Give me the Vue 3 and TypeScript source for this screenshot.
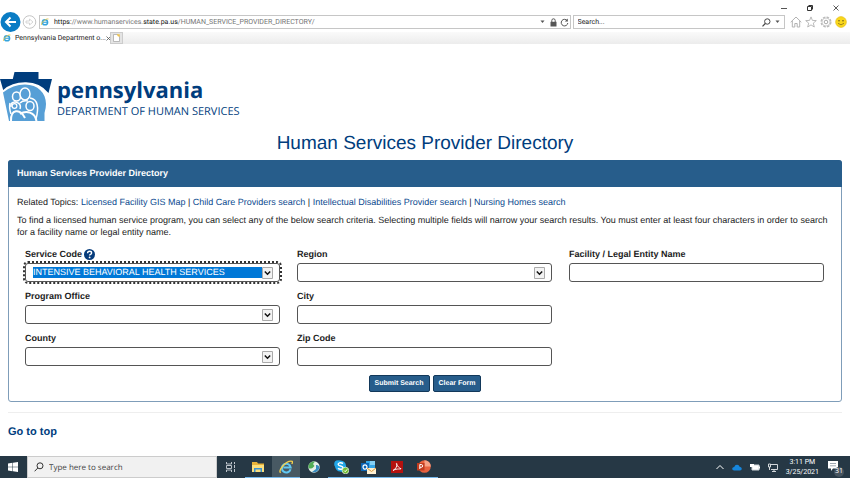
<script setup lang="ts">
import { reactive } from 'vue'

interface Field {
  id: string
  label: string
  kind: 'select' | 'text'
  options?: string[]
  help?: boolean
  active?: boolean
}

const fields: Field[] = [
  { id: 'service', label: 'Service Code', kind: 'select', options: ['INTENSIVE BEHAVIORAL HEALTH SERVICES'], help: true, active: true },
  { id: 'region', label: 'Region', kind: 'select', options: [''] },
  { id: 'facility', label: 'Facility / Legal Entity Name', kind: 'text' },
  { id: 'office', label: 'Program Office', kind: 'select', options: [''] },
  { id: 'city', label: 'City', kind: 'text' },
  { id: 'county', label: 'County', kind: 'select', options: [''] },
  { id: 'zip', label: 'Zip Code', kind: 'text' },
]

const values = reactive<Record<string, string>>({
  service: 'INTENSIVE BEHAVIORAL HEALTH SERVICES',
  region: '',
  facility: '',
  office: '',
  city: '',
  county: '',
  zip: '',
})

const topics: string[] = [
  'Licensed Facility GIS Map',
  'Child Care Providers search',
  'Intellectual Disabilities Provider search',
  'Nursing Homes search',
]

function clearForm(): void {
  for (const key of Object.keys(values)) values[key] = ''
}
</script>

<template>
  <div class="screen">
    <header class="chrome">
      <div class="titlebar">
        <button class="bare" aria-label="Minimize"><svg width="6" height="8" viewBox="0 0 6 8"><path d="M0 4.500h6" stroke="#555" fill="none" /></svg></button>
        <button class="bare" aria-label="Restore"><svg width="6" height="8" viewBox="0 0 6 8"><path d="M.5 2.500h4v4h-4zM1.500 1.500h4v4" stroke="#333" fill="none" /></svg></button>
        <button class="bare" aria-label="Close"><svg width="6" height="8" viewBox="0 0 6 8"><path d="M.5 1.500l5 5M5.500 1.500l-5 5" stroke="#333" fill="none" stroke-width=".8" /></svg></button>
      </div>
      <div class="navrow">
        <button class="bare" aria-label="Back">
          <svg width="21" height="20" viewBox="0 0 21 20"><circle cx="10.500" cy="10" r="10" fill="#0a7cc4" /><path d="M16 10H6M10.500 5.500L6 10l4.500 4.500" stroke="#fff" stroke-width="2" fill="none" /></svg>
        </button>
        <button class="bare" aria-label="Forward">
          <svg width="15" height="14" viewBox="0 0 15 14"><circle cx="7.500" cy="7" r="6.300" fill="#fff" stroke="#c4c4c4" /><path d="M4 6h3.500V4L11 7l-3.500 3V8H4z" fill="#fff" stroke="#ccc" stroke-width=".8" /></svg>
        </button>
        <div class="address">
          <svg class="ie" width="8" height="8" viewBox="0 0 16 16"><circle cx="8" cy="8.500" r="5.200" fill="none" stroke="#35a3dc" stroke-width="3" /><path d="M4 8.500h9" stroke="#35a3dc" stroke-width="2.200" /><path d="M1 14C-1 10 10 0 15 2" fill="none" stroke="#f0c63a" stroke-width="1.600" /></svg>
          <div class="url" role="textbox" aria-label="Address" contenteditable="true" spellcheck="false"><span class="dark">https:</span>//www.humanservices.<span class="dark">state.pa.us</span>/HUMAN_SERVICE_PROVIDER_DIRECTORY/</div>
          <svg width="5" height="4" viewBox="0 0 5 4"><path d="M.5 .5h4L2.500 3z" fill="#555" /></svg>
          <svg class="lock" width="7" height="9" viewBox="0 0 7 9"><path d="M1.800 4V2.500a1.700 1.700 0 0 1 3.400 0V4" fill="none" stroke="#555" /><path d="M.5 3.800h6V8.500h-6z" fill="#555" /></svg>
          <svg width="9" height="9" viewBox="0 0 9 9"><path d="M7.200 2.700A3.300 3.300 0 1 0 7.800 5" fill="none" stroke="#555" /><path d="M7.800.5v3H4.800z" fill="#555" /></svg>
        </div>
        <div class="searchbox">
          <input aria-label="Search the web" placeholder="Search..." />
          <svg width="9" height="9" viewBox="0 0 9 9"><circle cx="5.300" cy="3.500" r="2.700" fill="none" stroke="#444" /><path d="M3.300 5.500L.5 8.300" stroke="#444" stroke-width="1.200" /></svg>
          <svg width="5" height="4" viewBox="0 0 5 4"><path d="M.5 .5h4L2.500 3z" fill="#555" /></svg>
        </div>
        <div class="tools">
          <button class="bare" aria-label="Home"><svg width="12" height="12" viewBox="0 0 12 12"><path d="M.7 6.200L6 1l5.300 5.200M2.300 5v6h2.500V7.500h2.400V11h2.500V5" fill="none" stroke="#b2b2b2" /></svg></button>
          <button class="bare" aria-label="Favorites"><svg width="12" height="12" viewBox="0 0 12 12"><path d="M6 .9l1.400 3.500 3.900.2-3 2.500 1 3.900L6 8.900 2.700 11l1-3.900-3-2.500 3.900-.2z" fill="none" stroke="#b2b2b2" stroke-width=".9" /></svg></button>
          <button class="bare" aria-label="Settings"><svg width="12" height="12" viewBox="0 0 12 12"><circle cx="6" cy="6" r="4.900" fill="none" stroke="#b8b8b8" stroke-width="1.200" stroke-dasharray="2.600 1.250" /><circle cx="6" cy="6" r="4" fill="none" stroke="#bbb" stroke-width=".7" /><circle cx="6" cy="6" r="1.800" fill="none" stroke="#aaa" /></svg></button>
          <button class="bare" aria-label="Feedback"><svg width="12" height="12" viewBox="0 0 12 12"><circle cx="6" cy="6" r="5.400" fill="#f9d71c" stroke="#e3ba1a" stroke-width=".6" /><circle cx="4" cy="4.700" r=".8" fill="#6b5a1a" /><circle cx="8" cy="4.700" r=".8" fill="#6b5a1a" /><path d="M3 7.300q3 3 6 0" fill="none" stroke="#8d741a" stroke-width=".8" /></svg></button>
        </div>
      </div>
      <div class="tabs">
        <div class="tab">
          <svg class="ie" width="8" height="8" viewBox="0 0 16 16"><circle cx="8" cy="8.500" r="5.200" fill="none" stroke="#35a3dc" stroke-width="3" /><path d="M4 8.500h9" stroke="#35a3dc" stroke-width="2.200" /><path d="M1 14C-1 10 10 0 15 2" fill="none" stroke="#f0c63a" stroke-width="1.600" /></svg>
          <span>Pennsylvania Department o...</span>
          <button class="bare" aria-label="Close tab"><svg width="5" height="5" viewBox="0 0 5 5"><path d="M.5.5l4 4M4.500.5l-4 4" stroke="#555" stroke-width=".8" /></svg></button>
        </div>
        <button class="newtab" aria-label="New tab"><svg width="7" height="8" viewBox="0 0 7 8"><path d="M.5.5h4l2 2v5h-6z" fill="#fff" stroke="#aaa" stroke-width=".8" /><path d="M4 0l3 .4-.5 2.600-2-1z" fill="#eec24e" /></svg></button>
      </div>
    </header>

    <main class="page">
      <div class="brand">
        <svg width="52" height="50" viewBox="0 0 52 50">
          <path d="M3 20.500Q13 12.500 25 12.500C38 12.500 46 21 46 32q0 4-1.500 9v8H9z" fill="#579fd6" />
          <path d="M14.500 0h24v7H52l-3.500 14Q40 10.500 26 10.300 12 10 3.200 18L0 7h12.800z" fill="#003d7d" />
          <g fill="#579fd6" stroke="#fff" stroke-width="1.500">
            <path d="M30 26c8 1 9 10 6 21" fill="none" />
            <path d="M10 31c-1 4 0 8 1 11" fill="none" />
            <ellipse cx="16.500" cy="24.500" rx="4" ry="4.600" />
            <ellipse cx="25" cy="22" rx="5" ry="6" />
            <path d="M11 35c-1-5 4-6 7-4 2 1 3 3 2 6M20 31q3-3 8-2" fill="none" />
            <circle cx="14.500" cy="34" r="2.400" stroke-width="1.200" />
            <ellipse cx="30" cy="34" rx="4" ry="4.600" />
            <path d="M11 49c-.5-12 9-13 14-3M20 42c6-4 15-2 16.500 7" fill="none" stroke-width="2" />
          </g>
        </svg>
        <div class="brandtext">
          <div class="state">pennsylvania</div>
          <div class="dept">DEPARTMENT OF HUMAN SERVICES</div>
        </div>
      </div>

      <h1>Human Services Provider Directory</h1>

      <section class="panel">
        <h2>Human Services Provider Directory</h2>
        <div class="body">
          <p class="topics">Related Topics: <template v-for="(topic, i) in topics" :key="topic"><a href="#">{{ topic }}</a><template v-if="i < topics.length - 1"> | </template></template></p>
          <p>To find a licensed human service program, you can select any of the below search criteria. Selecting multiple fields will narrow your search results. You must enter at least four characters in order to search for a facility name or legal entity name.</p>
          <form @submit.prevent>
            <div class="grid">
              <div v-for="f in fields" :key="f.id" class="field" :class="f.id">
                <div class="caption">
                  <label :for="f.id">{{ f.label }}</label>
                  <button v-if="f.help" type="button" class="bare" aria-label="Help">
                    <svg width="11" height="11" viewBox="0 0 11 11"><circle cx="5.500" cy="5.500" r="5.500" fill="#063c7c" /><path d="M3.600 4.200q0-1.900 2-1.900t2 1.600q0 .9-1.100 1.400-.9.400-.9 1.200" fill="none" stroke="#fff" stroke-width="1.400" /><circle cx="5.600" cy="8.400" r=".9" fill="#fff" /></svg>
                  </button>
                </div>
                <div v-if="f.kind === 'select'" class="dropdown" :class="{ active: f.active }">
                  <select :id="f.id" v-model="values[f.id]">
                    <option v-for="o in f.options" :key="o" :value="o">{{ o }}</option>
                  </select>
                  <svg class="arrow" width="11" height="12" viewBox="0 0 11 12"><path d="M.5.5h10v11H.5z" fill="#f3f3f3" stroke="#aaa" /><path d="M2.800 4.500l2.700 2.700 2.700-2.700" fill="none" stroke="#111" stroke-width="1.500" /></svg>
                </div>
                <input v-else :id="f.id" v-model="values[f.id]" type="text" />
              </div>
            </div>
            <div class="actions">
              <button type="submit" class="action">Submit Search</button>
              <button type="button" class="action" @click="clearForm">Clear Form</button>
            </div>
          </form>
        </div>
      </section>
      <div class="foot"><a href="#">Go to top</a></div>
    </main>

    <footer class="taskbar">
      <button class="bare start" aria-label="Start"><svg width="10" height="10" viewBox="0 0 10 10"><path d="M0 1.400L4.500.8v3.900H0zM5 .7L10 0v4.700H5zM0 5.200h4.500v4L0 8.600zM5 5.200h5V10L5 9.300z" fill="#fff" /></svg></button>
      <div class="tasksearch">
        <svg width="10" height="10" viewBox="0 0 10 10"><circle cx="6" cy="3.800" r="3" fill="none" stroke="#333" /><path d="M3.800 6L.6 9.300" stroke="#333" /></svg>
        <input aria-label="Type here to search" placeholder="Type here to search" />
      </div>
      <div class="apps">
        <button class="app" aria-label="Task view"><svg width="10" height="10" viewBox="0 0 10 10"><path d="M.5 0v2h5V0M.5 10V8h5v2M.5 3.500h5v3h-5zM8.500 0v2M8.500 3v3M8.500 7v3" fill="none" stroke="#ccd3d8" stroke-width=".9" /></svg></button>
        <button class="app open" aria-label="File Explorer"><svg width="14" height="12" viewBox="0 0 14 12"><path d="M1 1h5l1 1.500h6V11H1z" fill="#e8b33a" /><path d="M1 4h12v7H1z" fill="#fbdf7d" /><path d="M3 7h8v4H9.500V8.500h-5V11H3z" fill="#3c92cf" /></svg></button>
        <button class="app open current" aria-label="Internet Explorer"><svg width="14" height="14" viewBox="0 0 16 16"><path d="M13.200 10.600A5 5 0 1 1 13.300 8.500H5" fill="none" stroke="#61c8f2" stroke-width="2.300" /><path d="M2 14.500C-2 13 8 0 15 1.500q1 1-.5 3" fill="none" stroke="#f5d04b" stroke-width="1.500" /></svg></button>
        <button class="app" aria-label="Browser"><svg width="12" height="12" viewBox="0 0 12 12"><circle cx="6" cy="6" r="5.700" fill="#e5f0e7" /><path d="M.5 5A5.600 5.600 0 0 1 7 .5L5 3l1.500 2-2 2C2 8 0 8 .5 5" fill="#51ad55" /><path d="M8 4c2-.5 3 1 3.500 2C11 10 8 12 4 11L8 8z" fill="#388bbf" /></svg></button>
        <button class="app open" aria-label="Skype"><svg width="15" height="14" viewBox="0 0 15 14"><circle cx="4" cy="4" r="3.800" fill="#22a7e8" /><circle cx="6.500" cy="6" r="5.500" fill="#22a7e8" /><circle cx="9" cy="8.500" r="3.500" fill="#22a7e8" /><path d="M9 3.500C6.500 2 4 3 4.200 4.500 4.500 6.400 9 5.600 9 7.700c0 2-3.500 2-5 .6" fill="none" stroke="#fff" stroke-width="1.500" /><circle cx="11.500" cy="10.500" r="3.300" fill="#72bd35" stroke="#fff" stroke-width=".6" /><path d="M10 10.500l1.200 1.200 2-2.400" fill="none" stroke="#fff" /></svg></button>
        <button class="app open" aria-label="Outlook"><svg width="15" height="14" viewBox="0 0 15 14"><path d="M5 1h9v9H5z" fill="#37a6e6" /><path d="M9 1h5v4H9z" fill="#83d0f5" /><path d="M0 3h8v8H0z" fill="#0b64b5" /><ellipse cx="4" cy="7" rx="2" ry="2.200" fill="none" stroke="#fff" stroke-width="1.200" /><path d="M6 8h9v6H6z" fill="#fff1d2" /><path d="M6 8l4.500 3.500L15 8" fill="none" stroke="#d9993b" /></svg></button>
        <button class="app open" aria-label="Acrobat"><svg width="12" height="12" viewBox="0 0 12 12"><path d="M0 0h12v12H0z" fill="#b5120f" /><path d="M2 9.500C5 8 6.500 4.500 5.800 2.500 5 1.500 5 5 10 7.800c0 .8-4-.8-8 1.700z" fill="none" stroke="#fff" stroke-width=".9" /></svg></button>
        <button class="app open" aria-label="PowerPoint"><svg width="14" height="13" viewBox="0 0 14 13"><circle cx="7.500" cy="6.500" r="6.300" fill="#e8623f" /><path d="M7.500.2a6.300 6.300 0 0 1 6.300 6.300H7.500z" fill="#f6a286" /><path d="M0 3h7.500v7.500H0z" fill="#c13b1e" /><path d="M2.800 9V4.500h1.400q1.500 0 1.500 1.400T4.200 7.300H2.800" fill="none" stroke="#fff" /></svg></button>
      </div>
      <div class="tray">
        <svg width="8" height="6" viewBox="0 0 8 6"><path d="M.5 5L4 1.500 7.500 5" fill="none" stroke="#fff" /></svg>
        <svg width="10" height="7" viewBox="0 0 10 7"><path d="M2.200 6.500Q0 6.300.2 4.500.5 3 2.200 3 3 .5 5.200.7 7 .9 7.600 2.700 9.800 3 9.800 4.800 9.700 6.500 8 6.500z" fill="#1686dc" /></svg>
        <svg width="10" height="8" viewBox="0 0 10 8"><path d="M2 2h7v5H2z" fill="#fff" stroke="#cfd6da" /><path d="M0 1h4v3H0zM9 3.500h1v2H9z" fill="#fff" /></svg>
        <svg width="10" height="9" viewBox="0 0 10 9"><path d="M3 1.500h6.500v5H3M4 8.500h4M6 6.500v2M.5 1v3h2V1zM1.500 4v3" fill="none" stroke="#e5e9eb" stroke-width=".9" /></svg>
        <div class="clock"><div>3:11 PM</div><div>3/25/2021</div></div>
        <button class="bare notice" aria-label="Notifications">
          <svg width="10" height="10" viewBox="0 0 10 10"><path d="M0 0h10v7.500H5L3 10V7.500H0z" fill="#fff" /><path d="M2 2.500h6M2 4.800h6" stroke="#8793a0" stroke-width=".8" /></svg>
          <span class="badge">31</span>
        </button>
      </div>
    </footer>
  </div>
</template>

<style>
body {
  background: #fff;
}
</style>

<style scoped>
.screen {
  min-height: 100vh;
  display: flex;
  flex-direction: column;
  font-family: "Liberation Sans", Arial, sans-serif;
  text-rendering: geometricPrecision;
  color: #222;
}
.screen * {
  box-sizing: border-box;
}
svg {
  display: block;
  flex: none;
}
button,
input,
select {
  font-family: inherit;
  text-rendering: inherit;
  margin: 0;
}
input,
select {
  min-width: 0;
}
a {
  text-decoration: none;
}
.bare {
  border: 0;
  padding: 0;
  background: none;
  display: block;
}
.chrome {
  font-family: Roboto, "Open Sans", sans-serif;
  font-size: 7px;
  line-height: 10px;
}
.titlebar {
  height: 12px;
  display: flex;
  justify-content: flex-end;
  align-items: flex-end;
  gap: 20px;
  padding-right: 11px;
}
.navrow {
  display: flex;
  align-items: center;
  height: 20px;
}
.navrow > .bare + .bare {
  margin: 0 2px 0 1px;
}
.address,
.searchbox {
  height: 14px;
  border: 1px solid #c6c6c6;
  display: flex;
  align-items: center;
}
.address {
  flex: 1;
  min-width: 0;
  gap: 3px;
  padding: 0 1px;
}
.lock {
  margin-left: 2px;
}
.url {
  flex: 1;
  min-width: 0;
  white-space: nowrap;
  overflow: hidden;
  padding-left: 2px;
  color: #757575;
  outline: none;
}
.dark {
  color: #111;
}
.searchbox {
  width: 25%;
  margin-left: 2px;
  gap: 4px;
  padding: 0 4px;
}
.searchbox input {
  flex: 1;
  border: 0;
  padding: 0;
  font-size: 7px;
  background: none;
}
.searchbox input::placeholder {
  color: #222;
}
.tools {
  display: flex;
  gap: 3px;
  padding: 0 3px 0 5px;
}
.tabs {
  height: 12px;
  display: flex;
  background: linear-gradient(#fafafa, #ececec);
}
.tab {
  width: 110px;
  display: flex;
  align-items: center;
  padding: 0 3px;
  background: #fff;
  white-space: nowrap;
}
.tab span {
  flex: 1;
  padding-left: 4px;
}
.newtab {
  width: 13px;
  padding: 0;
  border: 1px solid #ccc;
  background: #e4e4e4;
  display: flex;
  align-items: center;
  justify-content: center;
}
.page {
  flex: 1;
  padding-top: 28px;
}
.brand {
  display: flex;
  gap: 5px;
  color: #003d7d;
  font-family: "Open Sans", "Noto Sans", sans-serif;
}
.state {
  font-size: 22px;
  line-height: 24px;
  font-weight: 700;
  padding-top: 6px;
}
.dept {
  font-size: 11px;
  line-height: 20px;
}
h1 {
  margin: 9px 0 3px;
  text-align: center;
  font-size: 19px;
  line-height: 26px;
  font-weight: 400;
  color: #003d7d;
}
.panel {
  margin: 0 8px;
  border: 1px solid #7f9db9;
  border-radius: 3px;
}
h2 {
  margin: -1px -1px 0;
  padding: 0 9px;
  border-radius: 3px 3px 0 0;
  background: #275d8b;
  color: #fff;
  font-size: 9px;
  line-height: 27px;
}
.body {
  padding: 9px 8px;
  font-size: 9px;
  line-height: 12px;
}
p {
  margin: 0;
}
.topics {
  margin-bottom: 6px;
}
.topics a {
  color: #0b4a8f;
}
.grid {
  display: grid;
  grid-template-columns: repeat(3, 1fr);
  column-gap: 17px;
  row-gap: 8px;
  padding: 10px 9px 9px 8px;
}
.office,
.county {
  grid-column: 1;
}
.caption {
  display: flex;
  align-items: center;
  gap: 2px;
  height: 12px;
  margin-bottom: 3px;
  font-weight: 700;
}
.field > input {
  display: block;
  width: 100%;
  height: 19px;
  padding: 0 7px;
  border: 1px solid #555;
  border-radius: 3px;
  font-size: 9px;
}
.dropdown {
  display: grid;
  height: 19px;
  border: 1px solid #555;
  border-radius: 3px;
  align-items: center;
}
.dropdown select,
.arrow {
  grid-area: 1 / 1;
}
.dropdown select {
  appearance: none;
  width: 100%;
  height: 17px;
  border: 0;
  outline: none;
  padding: 3px 17px 3px 7px;
  font-size: 9px;
  line-height: 11px;
  background: none;
  color: #222;
}
.dropdown.active {
  outline: 2px dotted #333;
}
.dropdown.active select {
  background: #0078d7 content-box;
  color: #fff;
}
.arrow {
  justify-self: end;
  margin-right: 6px;
  pointer-events: none;
}
.actions {
  display: flex;
  justify-content: center;
  gap: 3px;
}
.action {
  height: 17px;
  padding: 0 5px;
  border: 1px solid #12385a;
  border-radius: 2px;
  background: #275d8b;
  color: #fff;
  font-size: 7px;
  font-weight: 700;
}
.foot {
  margin: 10px 8px 0;
  padding-top: 11px;
  border-top: 1px solid #eee;
  font-size: 11px;
  line-height: 16px;
  font-weight: 700;
}
.foot a {
  color: #003d7d;
}
.taskbar {
  height: 22px;
  display: flex;
  background: #263845;
  color: #fff;
  font-family: "Open Sans", "Noto Sans", sans-serif;
}
.start {
  padding: 0 9px 0 8px;
}
.tasksearch {
  width: 190px;
  display: flex;
  align-items: center;
  gap: 5px;
  padding: 0 6px;
  background: #f1f1f1;
  border: 1px solid #ccc;
}
.tasksearch input {
  flex: 1;
  border: 0;
  padding: 0;
  background: none;
  font-size: 8px;
}
.tasksearch input::placeholder {
  color: #444;
}
.apps {
  width: 221px;
  display: flex;
}
.app {
  flex: 1;
  padding: 0;
  border: 0;
  border-bottom: 1px solid transparent;
  background: none;
  display: flex;
  align-items: center;
  justify-content: center;
}
.open {
  border-bottom-color: #76b9ed;
}
.current {
  background: #485963;
}
.tray {
  flex: 1;
  display: flex;
  align-items: center;
  justify-content: flex-end;
  gap: 8px;
  padding-right: 10px;
}
.clock {
  font-family: Roboto, "Open Sans", sans-serif;
  font-size: 7px;
  line-height: 10px;
  text-align: center;
}
.notice {
  position: relative;
  padding: 0 2px 2px 1px;
}
.badge {
  position: absolute;
  right: -4px;
  bottom: -4px;
  width: 10px;
  height: 10px;
  border-radius: 5px;
  background: #46545f;
  color: #fff;
  font-size: 7px;
  line-height: 10px;
  text-align: center;
}
</style>
